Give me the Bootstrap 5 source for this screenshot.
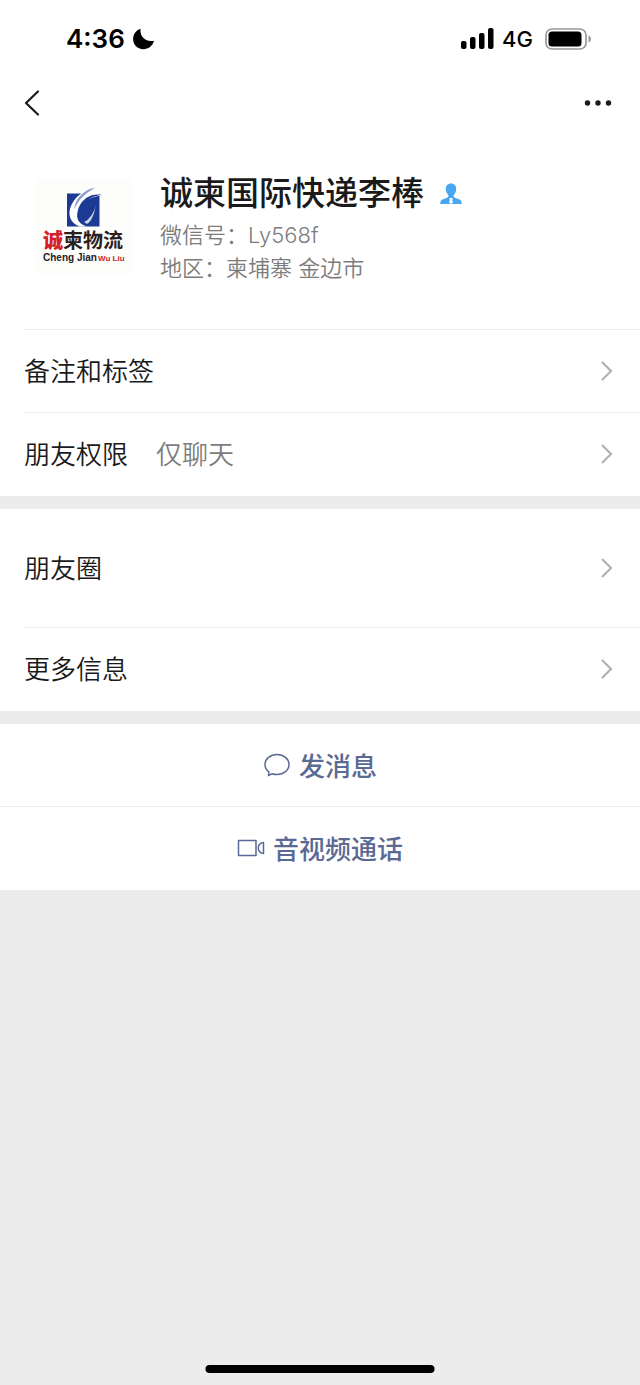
<!DOCTYPE html>
<html lang="zh-CN">
<head>
<meta charset="utf-8">
<meta name="viewport" content="width=device-width, initial-scale=1">
<title>诚柬国际快递李棒</title>
<link rel="stylesheet" href="https://cdn.jsdelivr.net/npm/bootstrap@5.3.0/dist/css/bootstrap.min.css">
<style>
  body { background: #ececec; color: #1a1a1a; font-family: "Liberation Sans", "Noto Sans CJK SC", sans-serif; font-size: 26px; }
  .status { height: 76px; padding: 2px 48px 0 66px; color: #000; font-family: Inter, sans-serif; }
  .clock { font-size: 26px; font-weight: 600; line-height: 32px; }
  .carrier { font-size: 22px; font-weight: 500; line-height: 32px; }
  .titlebar { height: 54px; padding: 0 22px; }
  .profile { height: 199px; padding: 44px 24px 0 34px; gap: 26px; }
  .profile h1 { font-size: 33px; line-height: 40px; font-weight: 500; }
  .facts { font-size: 22px; line-height: 33px; color: #7c7c7c; font-family: Inter, "Noto Sans CJK SC", sans-serif; font-weight: 350; }
  .fact-list { margin-top: 5px; }
  .line-row { margin-left: 24px; padding-right: 24px; height: 83px; color: #1a1a1a; border-top: 1px solid #ececec; font-weight: 350; }
  .line-row span { padding-top: 2px; }
  .action span { padding-top: 4px; }
  .first-row { border-top: 0; }
  .tall-row { height: 118px; }
  .setting { margin-left: 28px; color: #7c7c7c; }
  .group { padding-bottom: 1px; }
  .group + .group { margin-top: 13px; }
  .action { height: 82px; color: #5a6a93; font-size: 26px; font-weight: 500; }
  .action-list { border-color: #ececec !important; }
  .home-bar { width: 229px; height: 8px; bottom: 12px; background: #000; }
  svg { display: block; flex: none; }
</style>
</head>
<body>
<main class="d-flex flex-column min-vh-100 position-relative">
  <header class="bg-white">
    <div class="status d-flex justify-content-between align-items-center">
      <div class="d-flex align-items-center gap-2">
        <span class="clock">4:36</span>
        <svg width="22" height="22" viewBox="0 0 22 22" aria-hidden="true"><path d="M7.500.8C6.500 8 12 14.500 21 12.800C19.500 18.300 15.400 21.200 10.200 21.200C4.500 21.200.1 16.800.1 11.100C.1 6.400 3 2.300 7.500.8Z"/></svg>
      </div>
      <div class="d-flex align-items-center">
        <svg width="34" height="22" viewBox="0 0 34 22" aria-hidden="true"><rect x="1" y="13" width="5.500" height="8" rx="2"/><rect x="10" y="9" width="5.500" height="12" rx="2"/><rect x="19" y="5" width="5.500" height="16" rx="2"/><rect x="28" y="0" width="5.500" height="21" rx="2"/></svg>
        <span class="carrier ms-2 me-2">4G</span>
        <svg class="ms-1" width="47" height="22" viewBox="0 0 47 22" aria-hidden="true"><rect x="1" y="1" width="40" height="20" rx="6" fill="none" stroke="#999" stroke-width="1.700"/><rect x="3.500" y="3.500" width="33" height="15" rx="3.500"/><path d="M43.500 7.500C46.800 8.500 46.800 13.500 43.500 14.500Z" fill="#999"/></svg>
      </div>
    </div>
    <nav class="titlebar d-flex justify-content-between align-items-center" aria-label="导航">
      <button class="btn p-0 border-0" type="button" aria-label="返回"><svg width="20" height="28" viewBox="0 0 20 28" fill="none" stroke="#1a1a1a" stroke-width="2.200" stroke-linecap="round" stroke-linejoin="round"><path d="M16 2.500L4 14L16 25.500"/></svg></button>
      <button class="btn p-0 border-0" type="button" aria-label="更多"><svg width="40" height="20" viewBox="0 0 40 20" fill="#1a1a1a"><circle cx="9.500" cy="10" r="2.700"/><circle cx="20" cy="10" r="2.700"/><circle cx="30.500" cy="10" r="2.700"/></svg></button>
    </nav>
  </header>

  <section class="group bg-white">
    <div class="profile d-flex align-items-start">
      <svg class="mt-1" width="100" height="98" viewBox="0 0 100 98" role="img" aria-label="诚柬物流">
        <rect width="100" height="98" rx="7" fill="#fdfefb"/>
        <rect x="33" y="15.500" width="32.500" height="33" fill="#1c3a94"/>
        <path d="M60 9.500C48 12 37 22 35.500 34C35 41 39 46 46 48.500H53C45 46 42 41 43.500 34C45.500 26 54 18.500 68 17.500L66 13L55 14.500Z" fill="#fff"/>
        <path d="M47 17C51 13 56 10.500 61 9.800C57 12.500 53 14.500 49 18.500C45 22.500 42 27 40.500 31C40.500 26 43 21 47 17Z" fill="#8b9ccb"/>
        <path d="M45 29C49 20 58 15 68 17C60 17.500 53 21 49 27C46 31.500 45 36 47 40C44 37 43.500 33 45 29Z" fill="#1c3a94"/>
        <path d="M50 44C55 42 60 35 62 27C60 37 57 44 53 46Z" fill="#c8d1ea"/>
        <g font-family="Noto Sans CJK SC, sans-serif" font-weight="900" font-size="20"><text x="9" y="70" fill="#d3202a">诚</text><text x="29" y="70" font-weight="700" fill="#2b2020">柬物流</text></g>
        <g font-family="Liberation Sans, sans-serif" font-weight="700"><text x="9" y="83" font-size="10" fill="#252025">Cheng Jian</text><text x="64" y="83" font-size="8" fill="#c9252d">Wu Liu</text></g>
      </svg>
      <div>
        <div class="d-flex align-items-center">
          <h1 class="m-0">诚柬国际快递李棒</h1>
          <svg class="ms-3" width="22" height="22" viewBox="0 0 22 22" role="img" aria-label="男"><path d="M11 .5C14.500.5 16.500 3 16.200 6.500C16 9 14.800 11 13.500 12.200C13.500 14 14.500 14.700 17 15.500C20.500 16.500 21.700 17.500 21.700 21H.3C.3 17.500 1.500 16.500 5 15.500C7.500 14.700 8.500 14 8.500 12.200C7.200 11 6 9 5.800 6.500C5.500 3 7.500.5 11 .5Z" fill="#48a7f0"/><path d="M9.300 15H12.700L12.200 17L13 19.500L11 21L9 19.500L9.800 17Z" fill="#fff"/></svg>
        </div>
        <div class="fact-list">
          <div class="facts">微信号：Ly568f</div>
          <div class="facts">地区：柬埔寨 金边市</div>
        </div>
      </div>
    </div>
    <a href="#remark" class="line-row d-flex align-items-center text-decoration-none"><span>备注和标签</span><svg class="ms-auto" width="18" height="24" viewBox="0 0 18 24" fill="none" stroke="#b2b2b2" stroke-width="2.200"><path d="M4 3L13 12L4 21"/></svg></a>
    <a href="#privacy" class="line-row d-flex align-items-center text-decoration-none"><span>朋友权限</span><span class="setting">仅聊天</span><svg class="ms-auto" width="18" height="24" viewBox="0 0 18 24" fill="none" stroke="#b2b2b2" stroke-width="2.200"><path d="M4 3L13 12L4 21"/></svg></a>
  </section>

  <section class="group bg-white">
    <a href="#moments" class="line-row first-row tall-row d-flex align-items-center text-decoration-none"><span>朋友圈</span><svg class="ms-auto" width="18" height="24" viewBox="0 0 18 24" fill="none" stroke="#b2b2b2" stroke-width="2.200"><path d="M4 3L13 12L4 21"/></svg></a>
    <a href="#more" class="line-row d-flex align-items-center text-decoration-none"><span>更多信息</span><svg class="ms-auto" width="18" height="24" viewBox="0 0 18 24" fill="none" stroke="#b2b2b2" stroke-width="2.200"><path d="M4 3L13 12L4 21"/></svg></a>
  </section>

  <section class="group bg-white">
    <div class="action-list border-bottom">
      <button type="button" class="action w-100 border-0 bg-transparent d-flex justify-content-center align-items-center p-0"><svg class="me-2" width="28" height="26" viewBox="0 0 28 26" fill="none" stroke="#5a6a93" stroke-width="1.500" stroke-linejoin="round"><path d="M6 20C3.500 18.200 2 15.300 2 12.500C2 6.700 7.400 2.500 14 2.500S26 6.700 26 12.500S20.600 22.500 14 22.500C12.300 22.500 10.700 22.200 9.300 21.700L5.500 23.700Z"/></svg><span>发消息</span></button>
    </div>
    <button type="button" class="action w-100 border-0 bg-transparent d-flex justify-content-center align-items-center p-0"><svg class="me-2" width="28" height="26" viewBox="0 0 28 26" fill="none" stroke="#5a6a93" stroke-width="1.500" stroke-linejoin="round"><rect x="1.500" y="5.500" width="17.500" height="15"/><path d="M26.500 7.500V18.500C23.300 18 21.300 16 21.300 13S23.300 8 26.500 7.500Z"/></svg><span>音视频通话</span></button>
  </section>
  <div class="home-bar rounded-pill position-absolute start-50 translate-middle-x" aria-hidden="true"></div>
</main>
<script src="https://cdn.jsdelivr.net/npm/bootstrap@5.3.0/dist/js/bootstrap.bundle.min.js"></script>
</body>
</html>
